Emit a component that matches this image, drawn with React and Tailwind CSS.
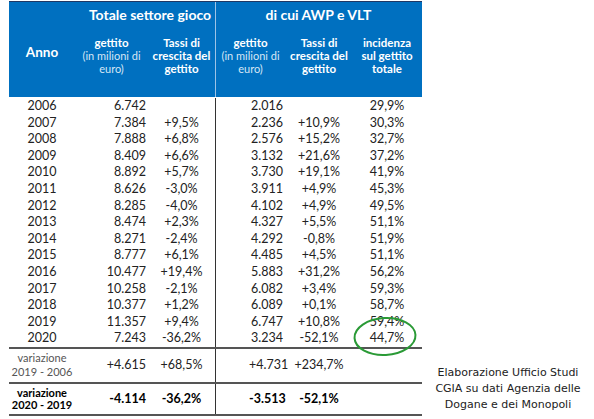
const ROWS = [
  ['2006', '6.742', '', '2.016', '', '29,9%'],
  ['2007', '7.384', '+9,5%', '2.236', '+10,9%', '30,3%'],
  ['2008', '7.888', '+6,8%', '2.576', '+15,2%', '32,7%'],
  ['2009', '8.409', '+6,6%', '3.132', '+21,6%', '37,2%'],
  ['2010', '8.892', '+5,7%', '3.730', '+19,1%', '41,9%'],
  ['2011', '8.626', '-3,0%', '3.911', '+4,9%', '45,3%'],
  ['2012', '8.285', '-4,0%', '4.102', '+4,9%', '49,5%'],
  ['2013', '8.474', '+2,3%', '4.327', '+5,5%', '51,1%'],
  ['2014', '8.271', '-2,4%', '4.292', '-0,8%', '51,9%'],
  ['2015', '8.777', '+6,1%', '4.485', '+4,5%', '51,1%'],
  ['2016', '10.477', '+19,4%', '5.883', '+31,2%', '56,2%'],
  ['2017', '10.258', '-2,1%', '6.082', '+3,4%', '59,3%'],
  ['2018', '10.377', '+1,2%', '6.089', '+0,1%', '58,7%'],
  ['2019', '11.357', '+9,4%', '6.747', '+10,8%', '59,4%'],
  ['2020', '7.243', '-36,2%', '3.234', '-52,1%', '44,7%'],
]

const GRID = 'grid grid-cols-[66px_73px_67px_70px_68px_68px]'

function SubHead({ children, divider }) {
  return (
    <div
      className={`flex flex-col items-center pt-[10px] text-center text-[11.5px] leading-[13px] ${
        divider ? 'border-l border-[#9dc3e6]' : ''
      }`}
    >
      {children}
    </div>
  )
}

function Gettito({ divider }) {
  return (
    <SubHead divider={divider}>
      <span>gettito</span>
      <span className="text-[11px] font-normal text-[#d6e6f5]">(in milioni di</span>
      <span className="text-[11px] font-normal text-[#d6e6f5]">euro)</span>
    </SubHead>
  )
}

function Tassi() {
  return (
    <SubHead>
      <span>Tassi di</span>
      <span>crescita del</span>
      <span>gettito</span>
    </SubHead>
  )
}

export default function App() {
  return (
    <div
      className="relative flex h-[419px] w-[594px] bg-white text-[#222]"
      style={{ fontFamily: 'Lato, "DejaVu Sans", sans-serif' }}
    >
      <div className="ml-[9px] mt-[1px] flex w-[413px] flex-col">
        {/* header */}
        <div className={`${GRID} grid-rows-[24px_71px] border-t border-[#1f3864] bg-[#0070c0] font-bold text-white`}>
          <div className="row-span-2 flex items-center justify-center pt-[6px] text-[13.5px]">Anno</div>
          <div className="col-span-2 flex items-center justify-center pl-[10px] text-[14px]">Totale settore gioco</div>
          <div className="col-span-3 flex items-center justify-center border-l border-[#9dc3e6] text-[14px]">
            di cui AWP e VLT
          </div>
          <Gettito />
          <Tassi />
          <Gettito divider />
          <Tassi />
          <SubHead>
            <span>incidenza</span>
            <span>sul gettito</span>
            <span>totale</span>
          </SubHead>
        </div>

        {/* body */}
        <div className="flex flex-col pt-[1px] text-[12.5px]">
          {ROWS.map((r) => (
            <div key={r[0]} className={`${GRID} h-[16.6px] items-center leading-none`}>
              <div className="text-center">{r[0]}</div>
              <div className="pr-[2px] text-right">{r[1]}</div>
              <div className="text-center">{r[2]}</div>
              <div className="h-full border-l border-[#333] pr-[2px] text-right leading-[16.6px]">{r[3]}</div>
              <div className="text-center">{r[4]}</div>
              <div className="text-center">{r[5]}</div>
            </div>
          ))}
        </div>

        <div className={`${GRID} h-[35px] items-center border-t-2 border-[#555] text-[12.5px]`}>
          <div className="flex flex-col items-center text-[11px] leading-[14px] text-[#555]">
            <span>variazione</span>
            <span>2019 - 2006</span>
          </div>
          <div className="pr-[2px] text-right">+4.615</div>
          <div className="text-center">+68,5%</div>
          <div className="flex h-full items-center border-l border-[#333] pl-[33px]">+4.731</div>
          <div className="text-center">+234,7%</div>
          <div />
        </div>

        <div className={`${GRID} h-[34px] items-center border-y-2 border-[#555] text-[12.5px] font-bold text-black`}>
          <div className="flex flex-col items-center text-[11px] leading-[12px]">
            <span>variazione</span>
            <span>2020 - 2019</span>
          </div>
          <div className="pr-[2px] text-right">-4.114</div>
          <div className="text-center">-36,2%</div>
          <div className="flex h-full items-center border-l border-[#333] pl-[33px]">-3.513</div>
          <div className="text-center">-52,1%</div>
          <div />
        </div>
      </div>

      <div
        className="flex flex-1 flex-col items-center justify-end pb-[6px] text-center text-[11px] leading-[16px] text-[#222]"
        style={{ fontFamily: '"DejaVu Sans", sans-serif' }}
      >
        <span>Elaborazione Ufficio Studi</span>
        <span>CGIA su dati Agenzia delle</span>
        <span>Dogane e dei Monopoli</span>
      </div>

      {/* green highlight */}
      <svg className="absolute left-[352px] top-[315px]" width="68" height="44" viewBox="0 0 68 44">
        <ellipse cx="33" cy="21.5" rx="30.5" ry="18.5" fill="none" stroke="#2a9a36" strokeWidth="2" transform="rotate(-3 33 21.5)" />
      </svg>
    </div>
  )
}
